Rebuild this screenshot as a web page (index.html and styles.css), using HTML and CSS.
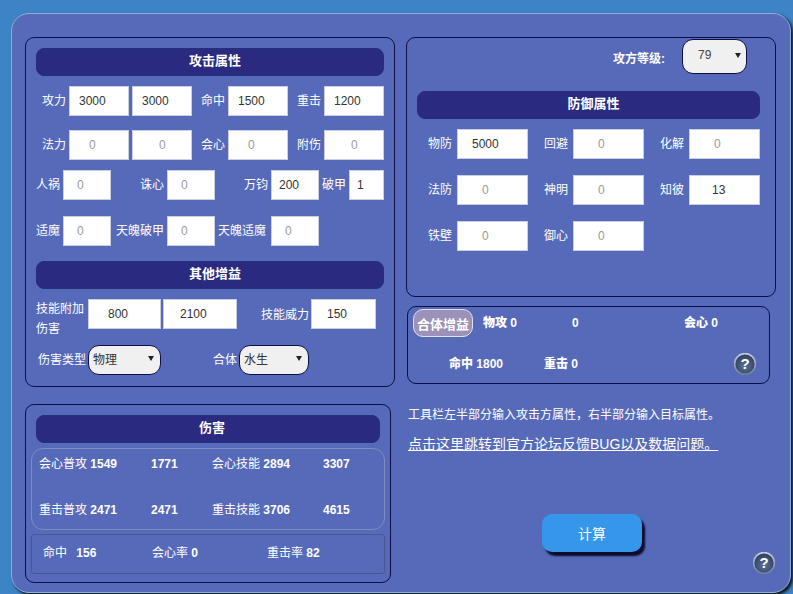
FILE: index.html
```html
<!DOCTYPE html>
<html lang="zh">
<head>
<meta charset="utf-8">
<title>伤害计算器</title>
<link rel="stylesheet" href="styles.css">
</head>
<body>
<svg class="defs" width="0" height="0" aria-hidden="true">
  <defs>
    <radialGradient id="helpFill" cx="50%" cy="60%" r="55%">
      <stop offset="0" stop-color="#5c7394"/>
      <stop offset="0.7" stop-color="#3c4f73"/>
      <stop offset="1" stop-color="#2f3f63"/>
    </radialGradient>
    <linearGradient id="helpRing" x1="0" y1="0" x2="0" y2="1">
      <stop offset="0" stop-color="#c4ccd8"/>
      <stop offset="1" stop-color="#6d7f9c"/>
    </linearGradient>
  </defs>
</svg>
<main class="panel">
  <div class="col">
    <section class="box attack">
      <h2 class="bar">攻击属性</h2>
      <div class="row row-a m10">
        <label class="lbl">攻力</label><input class="in p9" value="3000"><input class="in p9" value="3000">
        <label class="lbl">命中</label><input class="in p9" value="1500">
        <label class="lbl">重击</label><input class="in p9" value="1200">
      </div>
      <div class="row row-a m14">
        <label class="lbl">法力</label><input class="in p20" placeholder="0"><input class="in p27" placeholder="0">
        <label class="lbl">会心</label><input class="in p20" placeholder="0">
        <label class="lbl">附伤</label><input class="in p27" placeholder="0">
      </div>
      <div class="row row-b m10">
        <label class="lbl">人祸</label><input class="in p13" placeholder="0">
        <label class="lbl">诛心</label><input class="in p13" placeholder="0">
        <label class="lbl">万钧</label><input class="in p7" value="200">
        <label class="lbl">破甲</label><input class="in p7" value="1">
      </div>
      <div class="row row-b m16">
        <label class="lbl">适魔</label><input class="in p13" placeholder="0">
        <label class="lbl">天魄破甲</label><input class="in p13" placeholder="0">
        <label class="lbl lbl-inset">天魄适魔</label><input class="in p13" placeholder="0">
      </div>
      <h2 class="bar m15">其他增益</h2>
      <div class="row row-c m10">
        <label class="lbl lbl-wrap">技能附加伤害</label><input class="in p20" value="800"><input class="in p17" value="2100">
        <label class="lbl">技能威力</label><input class="in p16" value="150">
      </div>
      <div class="row-d">
        <label class="lbl lbl-type">伤害类型</label>
        <span class="pick pick-type"><select class="sel"><option>物理</option></select></span>
        <label class="lbl lbl-merge">合体</label>
        <span class="pick pick-merge"><select class="sel"><option>水生</option></select></span>
      </div>
    </section>

    <section class="box damage">
      <h2 class="bar bar-damage">伤害</h2>
      <div class="hits">
        <span>会心普攻 <b>1549</b></span><b>1771</b><span>会心技能 <b>2894</b></span><b>3307</b>
        <span>重击普攻 <b>2471</b></span><b>2471</b><span>重击技能 <b>3706</b></span><b>4615</b>
      </div>
      <div class="rates">
        <span class="rate-a">命中 <b class="gap-num">156</b></span>
        <span class="rate-b">会心率 <b>0</b></span>
        <span>重击率 <b>82</b></span>
      </div>
    </section>
  </div>

  <div class="col">
    <section class="box defense">
      <div class="level">
        <label class="level-lbl">攻方等级:</label>
        <span class="pick pick-level"><select class="sel"><option>79</option></select></span>
      </div>
      <h2 class="bar m18">防御属性</h2>
      <div class="row row-e m10">
        <label class="lbl">物防</label><input class="in p15" value="5000">
        <label class="lbl">回避</label><input class="in p25" placeholder="0">
        <label class="lbl">化解</label><input class="in p25" placeholder="0">
      </div>
      <div class="row row-e m16">
        <label class="lbl">法防</label><input class="in p25" placeholder="0">
        <label class="lbl">神明</label><input class="in p25" placeholder="0">
        <label class="lbl">知彼</label><input class="in p23" value="13">
      </div>
      <div class="row row-e m16">
        <label class="lbl">铁壁</label><input class="in p25" placeholder="0">
        <label class="lbl">御心</label><input class="in p25" placeholder="0">
      </div>
    </section>

    <section class="box buff">
      <div class="buff-top">
        <button class="chip">合体增益</button>
        <b class="buff-a">物攻 0</b><b class="buff-b">0</b><b>会心 0</b>
      </div>
      <div class="buff-low">
        <b class="buff-c">命中 1800</b><b>重击 0</b>
        <svg class="help help-auto" viewBox="0 0 22 22" width="22" height="22" role="img" aria-label="帮助">
          <circle cx="11" cy="11" r="10.4" fill="url(#helpFill)" stroke="url(#helpRing)" stroke-width="1.6"/>
          <text class="help-q" x="11" y="16">?</text>
        </svg>
      </div>
    </section>

    <p class="note">工具栏左半部分输入攻击方属性，右半部分输入目标属性。</p>
    <p class="note-link"><a href="#">点击这里跳转到官方论坛反馈BUG以及数据问题。</a></p>

    <div class="actions">
      <button class="calc">计算</button>
      <svg class="help help-end" viewBox="0 0 22 22" width="22" height="22" role="img" aria-label="帮助">
        <circle cx="11" cy="11" r="10.4" fill="url(#helpFill)" stroke="url(#helpRing)" stroke-width="1.6"/>
        <text class="help-q" x="11" y="16">?</text>
      </svg>
    </div>
  </div>
</main>
</body>
</html>
```

FILE: styles.css
```css
* { box-sizing: border-box; }

html, body { height: 100%; }

body {
  margin: 0;
  padding: 13px 0 0 11px;
  overflow: hidden;
  background: #3c84c6;
  color: #fff;
  font: 12px/20px "Liberation Sans", "Noto Sans CJK SC", sans-serif;
}

.defs { position: absolute; }

.panel {
  display: grid;
  grid-template-columns: 370px 370px;
  column-gap: 11px;
  align-items: start;
  width: 780px;
  height: 580px;
  padding: 23px 0 0 13px;
  background: #566ab9;
  border: 1px solid #8fb0d6;
  border-radius: 18px;
  box-shadow: 2px 2px 3px #111;
}

.col { display: flex; flex-direction: column; align-items: flex-start; }

.box {
  border: 1px solid #0b0f45;
  border-radius: 9px;
}

.bar {
  height: 28px;
  margin: 0;
  padding-left: 10px;
  background: #2a2a80;
  border: 1px solid #25307a;
  border-radius: 8px;
  font-size: 13px;
  font-weight: bold;
  line-height: 23px;
  text-align: center;
}
.bar-damage { padding-left: 8px; }

.attack { width: 370px; height: 350px; padding: 10px; }

.damage { width: 366px; height: 179px; margin-top: 17px; padding: 10px; }

.defense { width: 370px; height: 260px; padding: 1px 15px 0 10px; }

.m10 { margin-top: 10px; }
.m14 { margin-top: 14px; }
.m15 { margin-top: 15px; }
.m16 { margin-top: 16px; }
.m18 { margin-top: 17px; }

.row { display: grid; column-gap: 3px; height: 30px; align-items: center; }
.row-a { grid-template-columns: 30px 60px 60px 30px 60px 30px 60px; }
.row-b { grid-template-columns: 24px 48px 50px 48px 50px 48px 24px 35px; }
.row-c { grid-template-columns: 50px 73px 74px 70px 65px; column-gap: 2px; align-items: start; height: 40px; }
.row-e { grid-template-columns: 35px 71px 35px 71px 35px 71px; column-gap: 5px; }

.lbl { text-align: right; white-space: nowrap; }
.lbl-inset { padding-right: 2px; }
.lbl-wrap { width: 49px; white-space: normal; text-align: left; }
.row-c .lbl:not(.lbl-wrap) { padding-top: 6px; }

.in {
  width: 100%;
  height: 30px;
  margin: 0;
  background: #fff;
  border: 1px solid #c8cede;
  border-radius: 0;
  color: #333;
  font: 12px "Liberation Sans", sans-serif;
  outline: 0;
}
.in::placeholder { color: #999; opacity: 1; }
.p7 { padding: 0 0 0 7px; }
.p9 { padding: 0 0 0 9px; }
.p13 { padding: 0 0 0 13px; }
.p15 { padding: 0 0 0 14px; }
.p16 { padding: 0 0 0 15px; }
.p17 { padding: 0 0 0 16px; }
.p20 { padding: 0 0 0 19px; }
.p23 { padding: 0 0 0 22px; }
.p25 { padding: 0 0 0 24px; }
.p27 { padding: 0 0 0 26px; }

.row-d { display: flex; align-items: center; height: 30px; margin-top: 6px; }
.lbl-type { width: 48px; margin: 0 2px 0 2px; }
.lbl-merge { width: 24px; margin: 0 2px 0 52px; }

.pick { position: relative; display: block; }
.pick::after {
  content: "";
  position: absolute;
  top: 50%;
  right: 7px;
  margin-top: -4px;
  border: 3.5px solid transparent;
  border-top: 5px solid #222;
  border-bottom: 0;
  pointer-events: none;
}
.pick-type { width: 73px; height: 30px; }
.pick-merge { width: 70px; height: 30px; }
.pick-level { width: 65px; height: 35px; }
.pick-level::after { right: 6px; margin-top: -4px; }

.sel {
  display: block;
  width: 100%;
  height: 100%;
  padding: 0 0 0 4px;
  appearance: none;
  background: #f0f0f0;
  border: 1px solid #0b0f45;
  border-radius: 11px;
  color: #333;
  font: 12px "Liberation Sans", "Noto Sans CJK SC", sans-serif;
}
.pick-level .sel { padding: 0 0 4px 15px; color: #444; }

.level { display: flex; justify-content: flex-end; align-items: flex-start; margin-right: 13px; }
.level-lbl { margin: 10px 17px 0 0; font-weight: bold; }

.hits {
  display: grid;
  grid-template-columns: 112px 61px 111px auto;
  grid-auto-rows: 20px;
  row-gap: 26px;
  height: 82px;
  margin: 5px -5px 0;
  padding: 5px 0 0 7px;
  border: 1px solid #7f8cbd;
  border-radius: 12px;
}

.rates {
  display: flex;
  height: 40px;
  margin: 4px -5px 0;
  padding: 8px 0 0 11px;
  border: 1px solid #48588f;
  border-radius: 3px;
}
.rate-a { width: 109px; }
.rate-b { width: 115px; }
.gap-num { margin-left: 6px; }

.buff {
  width: 363px;
  height: 78px;
  margin: 9px 0 0 1px;
  padding: 2px 0 0 5px;
  font-weight: bold;
}
.buff-top { display: flex; align-items: flex-start; }
.buff-top b { line-height: 28px; }
.chip {
  width: 60px;
  height: 28px;
  padding: 0;
  background: #9c91b9;
  border: 1px solid #dfe2ee;
  border-radius: 10px;
  color: #fff;
  font: bold 13px "Liberation Sans", "Noto Sans CJK SC", sans-serif;
}
.buff-a { width: 89px; margin-left: 10px; }
.buff-b { width: 112px; }
.buff-low { display: flex; align-items: center; height: 22px; margin-top: 16px; padding-left: 36px; }
.buff-c { width: 95px; }

.help { display: block; flex: none; }
.help-auto { margin-left: 156px; }
.help-q {
  fill: #fff;
  font: bold 15px "Liberation Sans", sans-serif;
  text-anchor: middle;
}

.note { margin: 21px 0 0 2px; }
.note-link { margin: 9px 0 0 2px; font-size: 14px; }
.note-link a { color: #fff; }

.actions { display: flex; align-items: flex-start; margin-top: 60px; padding-left: 136px; }
.calc {
  width: 100px;
  height: 38px;
  padding: 0;
  background: #3596ea;
  border: 0;
  border-radius: 10px;
  box-shadow: 3px 4px 2px #0a0a2a;
  color: #fff;
  font: 14px "Liberation Sans", "Noto Sans CJK SC", sans-serif;
}
.help-end { margin: 38px 0 0 111px; }
```
